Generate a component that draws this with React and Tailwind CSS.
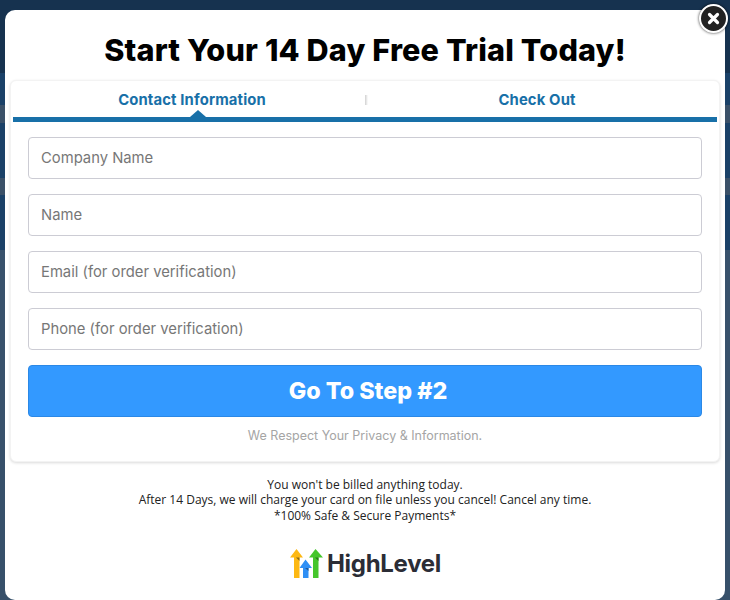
function Field({ placeholder }) {
  return (
    <input
      type="text"
      placeholder={placeholder}
      className="w-full h-[42px] px-3 rounded border border-[#ccccd4] bg-white text-[14.8px] text-[#333] placeholder:text-[#777] font-[Inter,sans-serif] outline-none"
    />
  );
}

function Logo() {
  return (
    <div className="flex items-center justify-center gap-[3px]">
      <svg width="34" height="31" viewBox="0 0 34 31">
        <path d="M0 9.5 L6.5 1 L13 9.5 L9.5 9.5 L9.5 30 L4 30 L4 9.5 Z" fill="#fdb813" />
        <path d="M9.5 20 L15.5 11.5 L22 20 L18.5 20 L18.5 30 L13 30 L13 20 Z" fill="#2f8ff5" />
        <path d="M19 9.5 L25.5 1 L33 9.5 L28.5 9.5 L28.5 30 L23 30 L23 9.5 Z" fill="#45c62b" />
        <path d="M6 9.5 L9.5 9.5 L9.5 13 Z" fill="#8a6a10" />
        <path d="M15 20 L18.5 20 L18.5 23 Z" fill="#1d5a9c" />
        <path d="M25 9.5 L28.5 9.5 L28.5 13 Z" fill="#2a7a1a" />
      </svg>
      <span className="pt-[1px] text-[24px] font-bold text-[#2b2d36] leading-none font-[Inter,sans-serif] tracking-[-0.3px]">HighLevel</span>
    </div>
  );
}

export default function App() {
  return (
    <div className="relative w-[730px] h-[600px] overflow-hidden bg-[#37506a]">
      {/* page behind the overlay */}
      <div className="absolute inset-0 flex flex-col">
        <div className="h-[73px] bg-[#16324f]" />
        <div className="h-[32px] bg-[#1a4168]" />
        <div className="h-[18px] bg-[#3a5068]" />
        <div className="h-[55px] bg-[#1a4168]" />
        <div className="h-[17px] bg-[#3a5068]" />
        <div className="h-[55px] bg-[#1a4168]" />
      </div>

      {/* modal */}
      <div className="absolute left-[5px] top-[10px] w-[720px] h-[590px] bg-white rounded-[10px] px-[5px]">
        <h1 className="h-[70px] pt-[18px] text-center text-[30.6px] leading-[44px] font-extrabold tracking-[0.15px] text-black font-[Inter,sans-serif]">
          Start Your 14 Day Free Trial Today!
        </h1>

        <div className="h-[382px] rounded-md bg-white border border-[#f3f3f3] shadow-[0_1px_3px_rgba(0,0,0,0.15)] px-[2px]">
          <div className="relative flex h-[41px] border-b-[5px] border-[#1870a8]">
            <div className="w-[352px] flex items-center justify-center pl-[6px] pt-[2px] text-[14.8px] tracking-[0.15px] font-bold text-[#1870a8] font-[Inter,sans-serif]">
              Contact Information
            </div>
            <div className="w-[3px] h-[10px] mt-[14px] bg-gradient-to-r from-[#d0d0d0] to-white" />
            <div className="flex-1 flex items-center justify-center pr-[11px] pt-[2px] text-[14.8px] tracking-[0.15px] font-bold text-[#1870a8] font-[Inter,sans-serif]">
              Check Out
            </div>
            <div className="absolute left-[177px] bottom-0 w-0 h-0 border-x-[8px] border-x-transparent border-b-[7px] border-b-[#1870a8]" />
          </div>

          <form className="flex flex-col gap-[15px] pt-[15px] px-[15px]">
            <Field placeholder="Company Name" />
            <Field placeholder="Name" />
            <Field placeholder="Email (for order verification)" />
            <Field placeholder="Phone (for order verification)" />
            <button
              type="button"
              className="h-[52px] pl-[6px] rounded border border-[#2b88e6] bg-[#3399ff] text-white text-[23.3px] font-extrabold font-[Inter,sans-serif]"
            >
              Go To Step #2
            </button>
          </form>
          <p className="mt-[10px] text-center text-[12.5px] text-[#a5a5a5] font-[Inter,sans-serif]">
            We Respect Your Privacy &amp; Information.
          </p>
        </div>

        <div className="pt-[14.6px] text-center text-[12px] leading-[15.5px] text-[#222] font-['Open_Sans',sans-serif]">
          <p>You won't be billed anything today.</p>
          <p>After 14 Days, we will charge your card on file unless you cancel! Cancel any time.</p>
          <p>*100% Safe &amp; Secure Payments*</p>
        </div>

        <div className="pt-[25.4px] pl-[1px]">
          <Logo />
        </div>
      </div>

      {/* close button */}
      <button
        type="button"
        className="absolute left-[699px] top-[4px] w-[29px] h-[29px] rounded-full bg-[#222] border-2 border-white shadow-[0_0_3px_rgba(0,0,0,0.8)] flex items-center justify-center"
      >
        <svg width="13" height="13" viewBox="0 0 13 13">
          <path d="M2.5 2.5 L10.5 10.5 M10.5 2.5 L2.5 10.5" stroke="#fff" strokeWidth="3.2" strokeLinecap="round" />
        </svg>
      </button>
    </div>
  );
}
